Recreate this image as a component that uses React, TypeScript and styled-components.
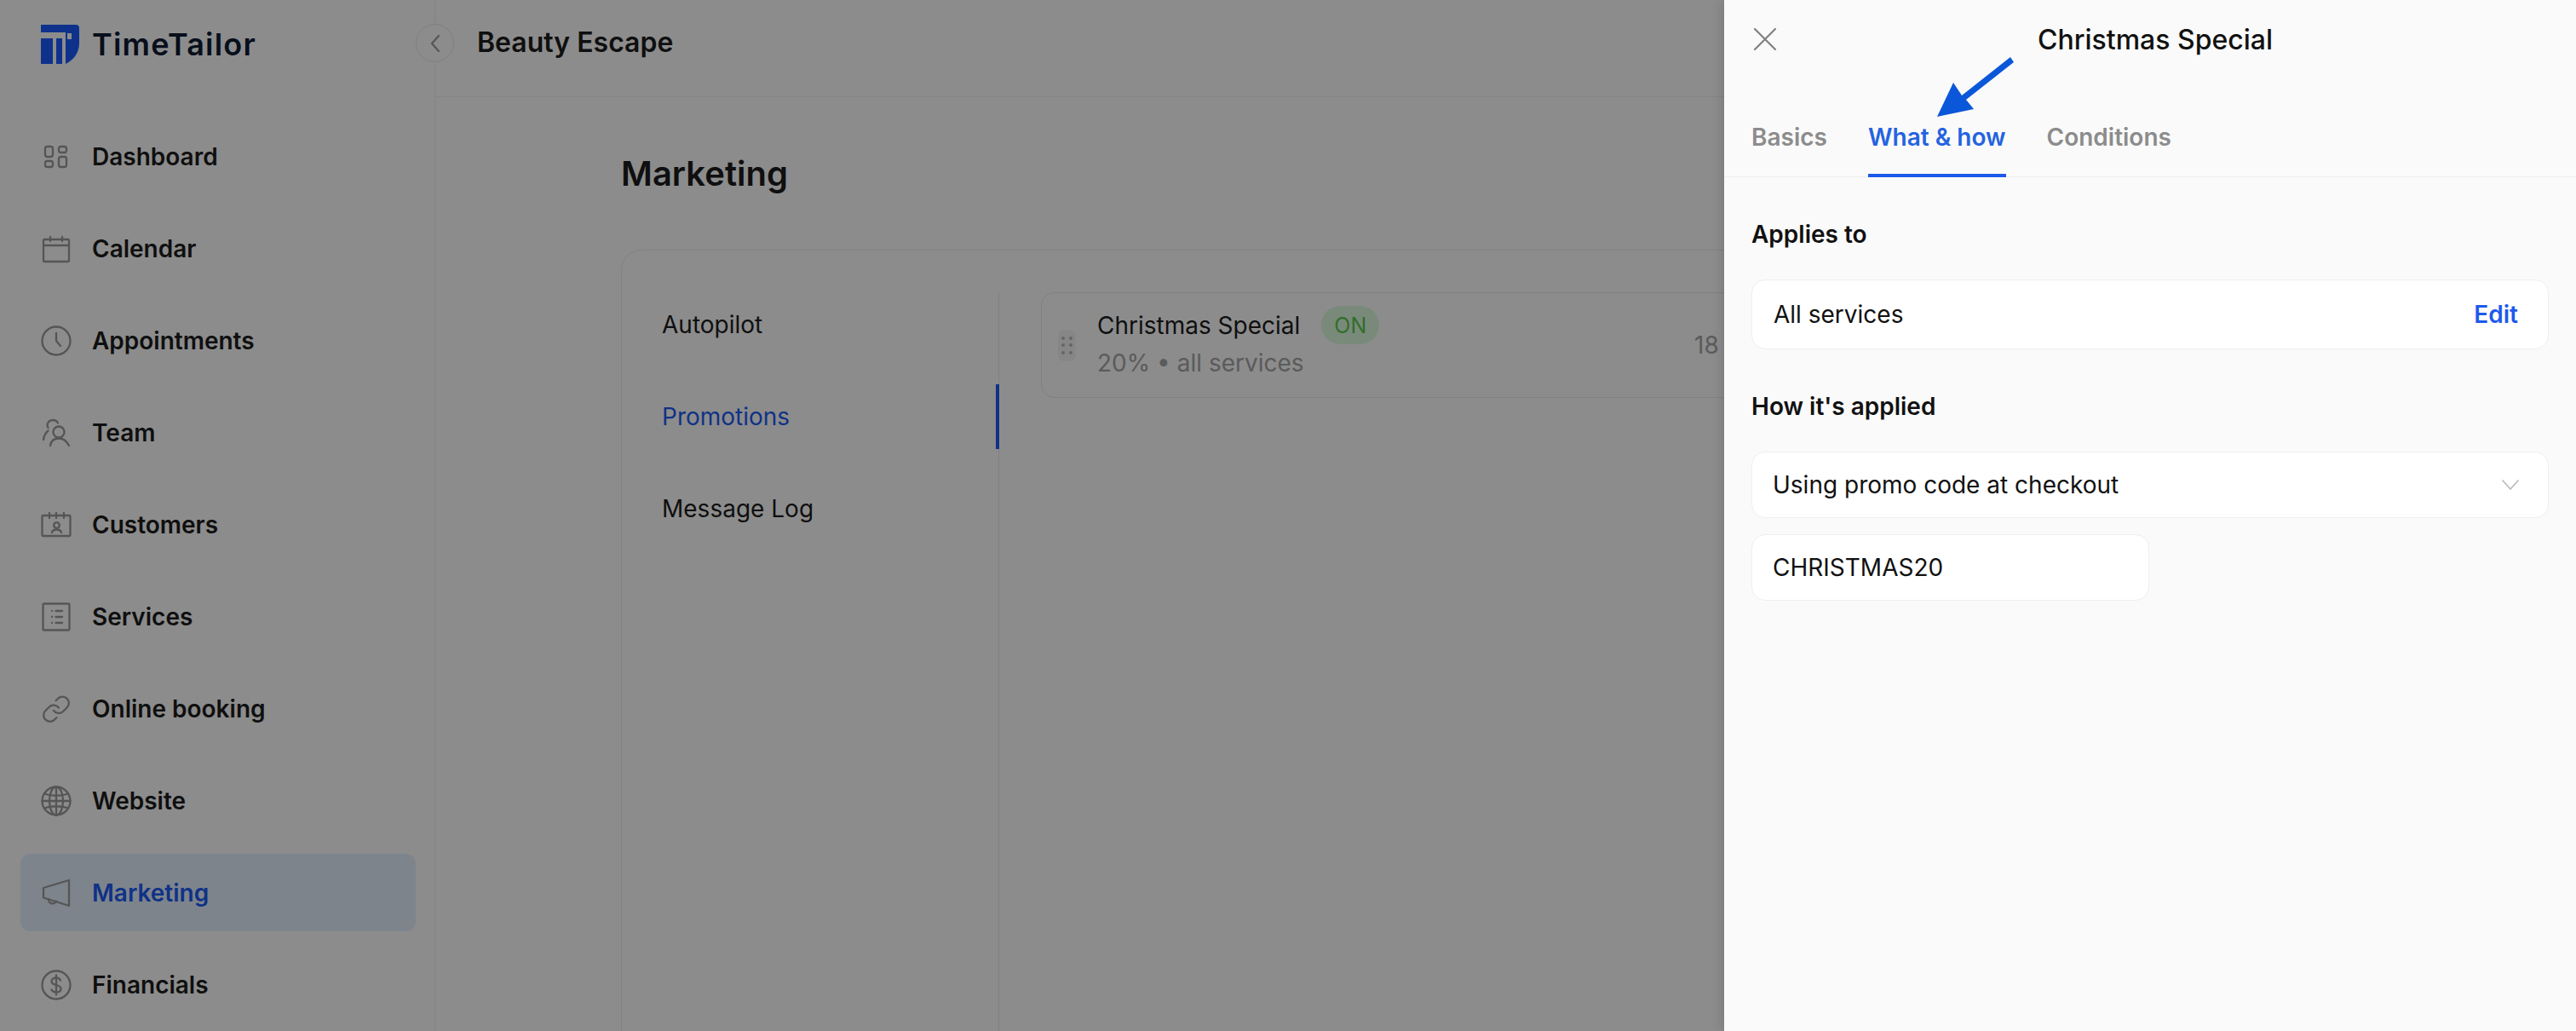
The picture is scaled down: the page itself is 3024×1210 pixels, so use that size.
import { ReactNode } from "react"
import styled, { createGlobalStyle } from "styled-components"

const GlobalStyle = createGlobalStyle`
html, body {
    margin: 0;
    padding: 0;
    background: #fff;
    font-family: "Inter", "Liberation Sans", sans-serif;
}
* {
    box-sizing: border-box;
}
`

const Page = styled.div`
position: relative;
display: flex;
width: 3024px;
height: 1210px;
overflow: hidden;
background: #fff;
`

const Sidebar = styled.aside`
flex: 0 0 511px;
border-right: 1px solid #f0f0f0;
padding: 0 22px 0 24px;
`

const Brand = styled.div`
display: flex;
align-items: center;
gap: 15px;
height: 104px;
padding-left: 24px;
`

const BrandName = styled.span`
font-size: 36px;
font-weight: 600;
letter-spacing: 1.2px;
color: #0f1a33;
`

const Nav = styled.nav`
display: flex;
flex-direction: column;
gap: 17px;
padding-top: 34px;
`

const NavItem = styled.div<{ $active?: boolean }>`
display: flex;
align-items: center;
gap: 24px;
height: 91px;
flex: 0 0 91px;
padding-left: 24px;
border-radius: 12px;
font-size: 28px;
font-weight: 600;
color: ${(p) => (p.$active ? "#1c5cf5" : "#1c1c1c")};
background: ${(p) => (p.$active ? "#e4f0ff" : "transparent")};
`

const NavIcon = styled.svg`
flex: 0 0 36px;
width: 36px;
height: 36px;
fill: none;
stroke: #9c9c9c;
stroke-width: 2.3;
stroke-linecap: round;
stroke-linejoin: round;
`

const CollapseButton = styled.button`
position: absolute;
left: 488px;
top: 28px;
display: flex;
align-items: center;
justify-content: center;
width: 45px;
height: 45px;
padding: 0;
border: 1px solid #e8e8e8;
border-radius: 50%;
background: #fff;
`

const Main = styled.main`
flex: 1;
min-width: 0;
`

const TopBar = styled.header`
display: flex;
align-items: center;
height: 114px;
padding: 0 0 14px 49px;
border-bottom: 1px solid #f0f0f0;
font-size: 32px;
font-weight: 600;
color: #1c1c1c;
`

const Content = styled.div`
padding: 65px 0 0 218px;
`

const PageTitle = styled.h1`
margin: 0 0 64px;
font-size: 40px;
line-height: 50px;
font-weight: 600;
color: #1c1c1c;
`

const Card = styled.section`
display: flex;
width: 1970px;
height: 1000px;
padding-top: 49px;
border: 1px solid #ececec;
border-radius: 24px;
`

const SubNav = styled.div`
display: flex;
flex-direction: column;
gap: 32px;
flex: 0 0 443px;
border-right: 1px solid #ececec;
`

const SubNavItem = styled.div<{ $active?: boolean }>`
display: flex;
align-items: center;
height: 76px;
margin-right: -1px;
padding-left: 47px;
font-size: 28px;
color: ${(p) => (p.$active ? "#1c5cf5" : "#1c1c1c")};
border-right: 4px solid ${(p) => (p.$active ? "#1c5cf5" : "transparent")};
`

const PromoRow = styled.div`
display: flex;
align-items: center;
height: 124px;
width: 1450px;
margin-left: 49px;
padding-left: 19px;
border: 1px solid #ececec;
border-radius: 16px;
`

const DragHandle = styled.div`
display: grid;
grid-template-columns: 4px 4px;
gap: 4.5px 5px;
justify-content: center;
align-content: center;
flex: 0 0 21px;
height: 37px;
margin-right: 25px;
border-radius: 8px;
background: #f4f4f4;
`

const Dot = styled.span`
width: 4px;
height: 4px;
border-radius: 50%;
background: #b8b8b8;
`

const PromoInfo = styled.div`
flex: 0 0 701px;
margin-top: -5px;
`

const PromoTitleLine = styled.div`
display: flex;
align-items: center;
gap: 25px;
height: 45px;
font-size: 28px;
color: #1c1c1c;
`

const StatusPill = styled.span`
display: flex;
align-items: center;
justify-content: center;
width: 68px;
height: 45px;
border-radius: 23px;
background: #dcfce0;
color: #5cc84a;
font-size: 25px;
`

const PromoMeta = styled.div`
margin-top: 2px;
font-size: 28px;
line-height: 40px;
color: #a6a6a6;
`

const PromoCount = styled.span`
font-size: 28px;
color: #a6a6a6;
`

const Overlay = styled.div`
position: absolute;
inset: 0;
background: rgba(0, 0, 0, 0.45);
`

const Drawer = styled.aside`
position: absolute;
top: 0;
right: 0;
bottom: 0;
width: 1000px;
background: #fafafa;
box-shadow: 0 0 14px rgba(0, 0, 0, 0.18);
`

const DrawerHead = styled.div`
display: grid;
grid-template-columns: 1fr auto 1fr;
align-items: center;
height: 92px;
padding: 0 32px;
`

const CloseIcon = styled.svg`
width: 28px;
height: 28px;
margin-left: 2px;
fill: none;
stroke: #808080;
stroke-width: 2.2;
stroke-linecap: round;
`

const DrawerTitle = styled.h2`
margin: 0 0 0 12px;
font-size: 32px;
font-weight: 500;
color: #111;
`

const Tabs = styled.div`
display: flex;
gap: 48px;
height: 116px;
padding: 24px 32px 0;
border-bottom: 1px solid #eeeeee;
`

const Tab = styled.div<{ $active?: boolean }>`
display: flex;
align-items: center;
height: 92px;
padding-top: 1px;
font-size: 28px;
font-weight: 600;
color: ${(p) => (p.$active ? "#2563e0" : "#8c8c8c")};
border-bottom: 4px solid ${(p) => (p.$active ? "#1d5aeb" : "transparent")};
`

const Pointer = styled.svg`
position: absolute;
left: 246px;
top: 64px;
width: 100px;
height: 76px;
fill: #0b57d9;
`

const DrawerBody = styled.div`
padding: 0 32px;
`

const SectionLabel = styled.h3`
margin: 47px 0 33px;
font-size: 28px;
line-height: 40px;
font-weight: 600;
color: #111;
`

const FieldBox = styled.div<{ $narrow?: boolean; $height: number; $inset?: number }>`
display: flex;
align-items: center;
justify-content: space-between;
width: ${(p) => (p.$narrow ? "467px" : "100%")};
height: ${(p) => p.$height}px;
padding: 0 24px 0 ${(p) => p.$inset ?? 24}px;
border: 1px solid #efefef;
border-radius: 16px;
background: #fff;
font-size: 28px;
color: #111;
& + & {
    margin-top: 19px;
}
`

const EditLink = styled.span`
font-weight: 600;
color: #1d5aeb;
margin-right: 11px;
`

const SelectChevron = styled.svg`
width: 22px;
height: 14px;
margin-right: 9px;
fill: none;
stroke: #bcbcbc;
stroke-width: 1.8;
stroke-linecap: round;
stroke-linejoin: round;
`

const Logo = () => (
    <svg width="45" height="46" viewBox="0 0 45 46" fill="#1b5cff">
        <path d="M0 0H41a4 4 0 0 1 4 4V22C45 33 38 42 29 46V9H0Z" />
        <rect x="0" y="16" width="14" height="30" />
        <rect x="18" y="16" width="7" height="30" />
        <rect x="31" y="10" width="5" height="7" fill="#fff" />
    </svg>
)

const iconShapes: Record<string, ReactNode> = {
    dashboard: (
        <>
            <rect x="5" y="6" width="9" height="12" rx="2.5" />
            <rect x="5" y="23" width="9" height="7" rx="2.5" />
            <rect x="21" y="6" width="9" height="7" rx="2.5" />
            <rect x="21" y="18" width="9" height="12" rx="2.5" />
        </>
    ),
    calendar: (
        <>
            <rect x="3" y="7" width="30" height="26" rx="1" />
            <path d="M3 14H33M11 4V9M25 4V9" />
        </>
    ),
    clock: (
        <>
            <circle cx="18" cy="18" r="16.5" />
            <path d="M18 9V18L23 24" />
        </>
    ),
    team: (
        <>
            <circle cx="21" cy="17" r="6.5" />
            <path d="M11 33C12 27 16 24.5 21 24.5S30 27 33 33" />
            <path d="M8.5 12C6 8 9 3 14 3C17 3 19 4.5 20 6.5" />
            <path d="M8.5 15.5C5.5 18 3.5 22 3 26" />
        </>
    ),
    customers: (
        <>
            <rect x="1.5" y="7" width="33" height="24" rx="1" />
            <path d="M10 4V10M18 4V10M27 4V10" />
            <circle cx="18.5" cy="18.5" r="3.3" />
            <path d="M13 27C13.5 24.5 16 23.5 18.5 23.5S23.5 24.5 24 27" />
        </>
    ),
    services: (
        <>
            <rect x="2.5" y="2.5" width="31" height="31" rx="1" />
            <path d="M13 11V11M13 18V18M13 25V25M17.5 11H25M17.5 18H25M17.5 25H25" />
        </>
    ),
    link: (
        <>
            <path d="M15 20a7.5 7.5 0 0 0 11.3.8l4.5-4.5a7.5 7.5 0 0 0-10.6-10.6l-2.6 2.6" />
            <path d="M21 16.5a7.5 7.5 0 0 0-11.3-.8l-4.5 4.5a7.5 7.5 0 0 0 10.6 10.6l2.6-2.6" />
        </>
    ),
    globe: (
        <>
            <circle cx="18" cy="18" r="16.5" />
            <ellipse cx="18" cy="18" rx="8" ry="16.5" />
            <path d="M18 1.5V34.5M1.5 18H34.5M4 9.5C12 12.5 24 12.5 32 9.5M4 26.5C12 23.5 24 23.5 32 26.5" />
        </>
    ),
    megaphone: (
        <>
            <path d="M33 3V33L3 23.5V12Z" />
            <path d="M9 25.5C9 28.5 11 30.5 13.5 30.5S17.5 29 18 27.5" />
        </>
    ),
    dollar: (
        <>
            <circle cx="18" cy="18" r="16.5" />
            <path d="M23 12.5C22 10.5 20 9.5 18 9.5C15 9.5 12.5 11 12.5 13.7C12.5 16.5 15 17.3 18 18S23.5 19.7 23.5 22.5C23.5 25.2 21 26.5 18 26.5C15.5 26.5 13.5 25.5 12.5 23.5M18 6.5V29.5" />
        </>
    ),
}

const navItems = [
    { label: "Dashboard", icon: "dashboard" },
    { label: "Calendar", icon: "calendar" },
    { label: "Appointments", icon: "clock" },
    { label: "Team", icon: "team" },
    { label: "Customers", icon: "customers" },
    { label: "Services", icon: "services" },
    { label: "Online booking", icon: "link" },
    { label: "Website", icon: "globe" },
    { label: "Marketing", icon: "megaphone", active: true },
    { label: "Financials", icon: "dollar" },
]

export default function App() {
    return (
        <Page>
            <GlobalStyle />
            <Sidebar>
                <Brand>
                    <Logo />
                    <BrandName>TimeTailor</BrandName>
                </Brand>
                <Nav>
                    {navItems.map((item) => (
                        <NavItem key={item.label} $active={item.active}>
                            <NavIcon viewBox="0 0 36 36">{iconShapes[item.icon]}</NavIcon>
                            {item.label}
                        </NavItem>
                    ))}
                </Nav>
            </Sidebar>
            <CollapseButton>
                <svg width="16" height="24" viewBox="0 0 16 24" fill="none" stroke="#9c9c9c" strokeWidth="2.2" strokeLinecap="round" strokeLinejoin="round">
                    <path d="M12 3L4 12L12 21" />
                </svg>
            </CollapseButton>
            <Main>
                <TopBar>Beauty Escape</TopBar>
                <Content>
                    <PageTitle>Marketing</PageTitle>
                    <Card>
                        <SubNav>
                            <SubNavItem>Autopilot</SubNavItem>
                            <SubNavItem $active>Promotions</SubNavItem>
                            <SubNavItem>Message Log</SubNavItem>
                        </SubNav>
                        <PromoRow>
                            <DragHandle>
                                <Dot /><Dot /><Dot /><Dot /><Dot /><Dot />
                            </DragHandle>
                            <PromoInfo>
                                <PromoTitleLine>
                                    Christmas Special
                                    <StatusPill>ON</StatusPill>
                                </PromoTitleLine>
                                <PromoMeta>20% • all services</PromoMeta>
                            </PromoInfo>
                            <PromoCount>18</PromoCount>
                        </PromoRow>
                    </Card>
                </Content>
            </Main>
            <Overlay />
            <Drawer>
                <DrawerHead>
                    <CloseIcon viewBox="0 0 28 28">
                        <path d="M2 2L26 26M26 2L2 26" />
                    </CloseIcon>
                    <DrawerTitle>Christmas Special</DrawerTitle>
                </DrawerHead>
                <Tabs>
                    <Tab>Basics</Tab>
                    <Tab $active>What &amp; how</Tab>
                    <Tab>Conditions</Tab>
                </Tabs>
                <Pointer viewBox="0 0 100 76">
                    <polygon points="4,73 23,33 33,48 90,3 94,9 38,53 47,64" />
                </Pointer>
                <DrawerBody>
                    <SectionLabel>Applies to</SectionLabel>
                    <FieldBox $height={82} $inset={25}>
                        All services
                        <EditLink>Edit</EditLink>
                    </FieldBox>
                    <SectionLabel>How it's applied</SectionLabel>
                    <FieldBox $height={78}>
                        Using promo code at checkout
                        <SelectChevron viewBox="0 0 22 14">
                            <path d="M2 2L11 12L20 2" />
                        </SelectChevron>
                    </FieldBox>
                    <FieldBox $height={78} $narrow>CHRISTMAS20</FieldBox>
                </DrawerBody>
            </Drawer>
        </Page>
    )
}
